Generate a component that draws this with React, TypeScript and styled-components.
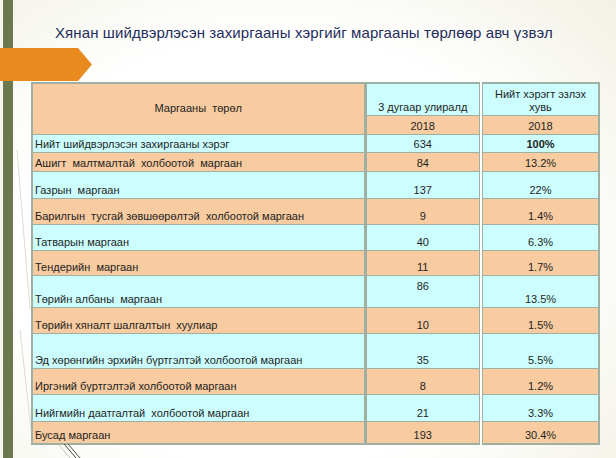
import React from 'react';
import styled, { createGlobalStyle } from 'styled-components';

const colors = {
  peach: '#f8cba0',
  cyan: '#ccfeff',
  line: '#9fb0a2',
  ink: '#1e1e1e',
  rail: '#6a7a4e',
  arrow: '#e88a1e',
  title: '#1f2e5c',
};

type Tone = 'peach' | 'cyan';

const GlobalStyle = createGlobalStyle`
  html, body {
    margin: 0;
    padding: 0;
  }
  body {
    font-family: "Liberation Sans", Arial, sans-serif;
  }
`;

const Slide = styled.div`
  position: relative;
  width: 616px;
  height: 458px;
  overflow: hidden;
  display: flex;
  flex-direction: column;
  background:
    linear-gradient(to right, #f6f6f0 0 3px, ${colors.rail} 3px 13px, transparent 13px),
    radial-gradient(ellipse 80% 85% at 45% 55%, #ffffff 55%, #f0efe1 100%);
`;

const Decor = styled.svg`
  position: absolute;
  left: 0;
  top: 0;
  pointer-events: none;
`;

const Title = styled.h1`
  margin: 24px 0 0 55px;
  font-size: 15px;
  line-height: 18px;
  letter-spacing: 0.1px;
  font-weight: normal;
  color: ${colors.title};
  white-space: nowrap;
`;

const Ribbon = styled.div`
  margin-top: 6px;
  width: 92px;
  height: 33px;
  background: ${colors.arrow};
  clip-path: polygon(0 0, 78px 0, 92px 50%, 78px 100%, 0 100%);
`;

const Grid = styled.table`
  margin: 1px 0 0 31px;
  width: 569px;
  border-collapse: collapse;
  table-layout: fixed;
  border: 2px solid ${colors.line};
  font-size: 11px;
  line-height: 13px;
  color: ${colors.ink};
`;

const Row = styled.tr<{ $h: number }>`
  height: ${(p) => p.$h}px;
`;

const dividers = ['3px solid', '4px double', 'none'];

const Cell = styled.td<{
  $tone: Tone;
  $col: number;
  $align?: 'left' | 'center';
  $valign?: 'top' | 'middle' | 'bottom';
  $bold?: boolean;
}>`
  background: ${(p) => colors[p.$tone]};
  border-top: 1px solid ${colors.line};
  border-bottom: 1px solid ${colors.line};
  border-right: ${(p) => dividers[p.$col]} ${colors.line};
  padding: ${(p) => (p.$valign === 'top' ? '4px 2px 0' : '0 2px 1px')};
  text-align: ${(p) => p.$align || 'center'};
  vertical-align: ${(p) => p.$valign || 'bottom'};
  font-weight: ${(p) => (p.$bold ? 'bold' : 'normal')};
  white-space: pre;
  overflow: hidden;
`;

const HeadCell = styled(Cell).attrs({ as: 'th' })``;

type Entry = {
  name: string;
  count: string;
  share: string;
  h: number;
  tone: Tone;
  bold?: boolean;
  countTop?: boolean;
};

const rows: Entry[] = [
  { name: 'Нийт шийдвэрлэсэн захиргааны хэрэг', count: '634', share: '100%', h: 18, tone: 'cyan', bold: true },
  { name: 'Ашигт  малтмалтай  холбоотой  маргаан', count: '84', share: '13.2%', h: 19, tone: 'peach' },
  { name: 'Газрын  маргаан', count: '137', share: '22%', h: 27, tone: 'cyan' },
  { name: 'Барилгын  тусгай зөвшөөрөлтэй  холбоотой маргаан', count: '9', share: '1.4%', h: 26, tone: 'peach' },
  { name: 'Татварын маргаан', count: '40', share: '6.3%', h: 26, tone: 'cyan' },
  { name: 'Тендерийн  маргаан', count: '11', share: '1.7%', h: 25, tone: 'peach' },
  { name: 'Төрийн албаны  маргаан', count: '86', share: '13.5%', h: 32, tone: 'cyan', countTop: true },
  { name: 'Төрийн хяналт шалгалтын  хуулиар', count: '10', share: '1.5%', h: 26, tone: 'peach' },
  { name: 'Эд хөрөнгийн эрхийн бүртгэлтэй холбоотой маргаан', count: '35', share: '5.5%', h: 35, tone: 'cyan' },
  { name: 'Иргэний бүртгэлтэй холбоотой маргаан', count: '8', share: '1.2%', h: 26, tone: 'peach' },
  { name: 'Нийгмийн даатгалтай  холбоотой маргаан', count: '21', share: '3.3%', h: 27, tone: 'cyan' },
  { name: 'Бусад маргаан', count: '193', share: '30.4%', h: 23, tone: 'peach' },
];

const App = () => {
  return (
    <Slide>
      <GlobalStyle />
      <Decor width="616" height="458">
        <line x1="17" y1="150" x2="30" y2="310" stroke="#dcdcd4" strokeWidth="1" />
        <line x1="20" y1="330" x2="31" y2="430" stroke="#dcdcd4" strokeWidth="1" />
        <line x1="58" y1="444" x2="70" y2="458" stroke="#c8c8c0" strokeWidth="1" />
        <line x1="64" y1="444" x2="76" y2="458" stroke="#4a4a44" strokeWidth="1" />
        <line x1="68" y1="444" x2="80" y2="458" stroke="#4a4a44" strokeWidth="1" />
      </Decor>
      <Title>Хянан шийдвэрлэсэн захиргааны хэргийг маргааны төрлөөр авч үзвэл</Title>
      <Ribbon />
      <Grid>
        <colgroup>
          <col style={{ width: 333 }} />
          <col style={{ width: 116 }} />
          <col />
        </colgroup>
        <thead>
          <Row $h={32}>
            <HeadCell rowSpan={2} $tone="peach" $col={0} $valign="middle">
              Маргааны  төрөл
            </HeadCell>
            <HeadCell $tone="cyan" $col={1}>3 дугаар улиралд</HeadCell>
            <HeadCell $tone="cyan" $col={2}>{'Нийт хэрэгт эзлэх\nхувь'}</HeadCell>
          </Row>
          <Row $h={19}>
            <HeadCell $tone="peach" $col={1}>2018</HeadCell>
            <HeadCell $tone="peach" $col={2}>2018</HeadCell>
          </Row>
        </thead>
        <tbody>
          {rows.map((r) => (
            <Row key={r.name} $h={r.h}>
              <Cell $tone={r.tone} $col={0} $align="left">{r.name}</Cell>
              <Cell $tone={r.tone} $col={1} $valign={r.countTop ? 'top' : 'bottom'}>{r.count}</Cell>
              <Cell $tone={r.tone} $col={2} $bold={r.bold}>{r.share}</Cell>
            </Row>
          ))}
        </tbody>
      </Grid>
    </Slide>
  );
};

export default App;
